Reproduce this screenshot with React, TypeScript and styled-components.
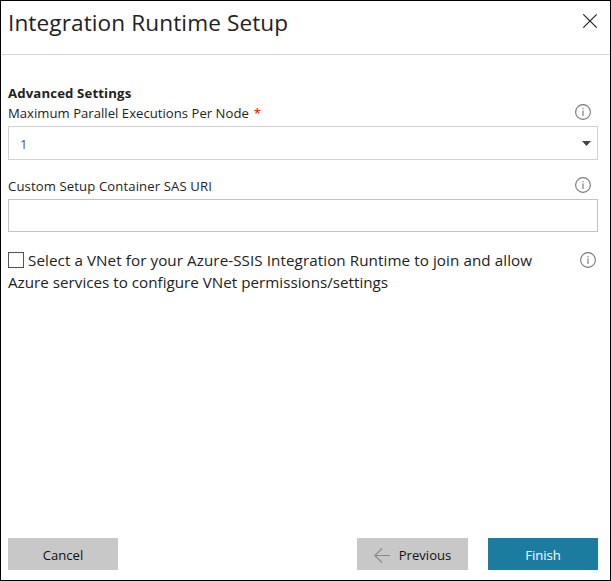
import React from 'react';
import styled, { createGlobalStyle } from 'styled-components';

const GlobalStyle = createGlobalStyle`
  * { box-sizing: border-box; }
  body { margin: 0; background: #fff; }
`;

const Dialog = styled.div`
  width: 611px;
  height: 581px;
  border: 1px solid #000;
  background: #fff;
  color: #222;
  font-family: 'Open Sans', 'Noto Sans', sans-serif;
  display: flex;
  flex-direction: column;
`;

const Header = styled.header`
  height: 54px;
  flex: none;
  display: flex;
  justify-content: space-between;
  align-items: flex-start;
  padding: 4px 12px 0 7px;
  border-bottom: 1px solid #d6d6d6;
`;

const Title = styled.h1`
  margin: 0;
  font-size: 22.6px;
  line-height: 36px;
  font-weight: 400;
  letter-spacing: 0.1px;
  white-space: nowrap;
`;

const CloseButton = styled.button`
  width: 16px;
  height: 16px;
  margin-top: 8px;
  padding: 0;
  border: 0;
  background: none;
  color: #222;
`;

const Icon = styled.svg`
  display: block;
  flex: none;
`;

const Body = styled.main`
  flex: 1;
  padding: 28px 12px 0 7px;
`;

const SectionTitle = styled.h2`
  margin: 0;
  height: 20px;
  font-size: 13.2px;
  line-height: 20px;
  font-weight: 700;
  letter-spacing: 0.13px;
  white-space: nowrap;
`;

const FieldHeader = styled.div`
  display: flex;
  justify-content: space-between;
  align-items: center;
  height: 18px;
  padding-right: 7px;
`;

const FieldLabel = styled.label<{ $spacing: number; $drop?: number }>`
  padding-top: ${(p) => p.$drop ?? 0}px;
  font-size: 13.1px;
  line-height: 18px;
  letter-spacing: ${(p) => p.$spacing}px;
  white-space: nowrap;
`;

const Required = styled.span`
  margin-left: 5px;
  font-weight: 600;
  color: #d83b01;
`;

const Select = styled.div`
  height: 34px;
  margin: 5px 0 16px;
  padding: 1px 6px 0 11px;
  border: 1px solid #d2d2d2;
  display: flex;
  justify-content: space-between;
  align-items: center;
  font-size: 13px;
  color: #555;
`;

const TextInput = styled.input`
  display: block;
  width: 590px;
  height: 33px;
  margin: 5px 0 17px;
  padding: 0 11px;
  border: 1px solid #c3c3c3;
  border-radius: 0;
  outline: 0;
`;

const VNetRow = styled.div`
  display: flex;
  justify-content: space-between;
  align-items: flex-start;
  padding-right: 2px;
`;

const VNetText = styled.label`
  font-size: 15.2px;
  line-height: 22px;
`;

const TextLine = styled.span<{ $spacing: number }>`
  display: flex;
  align-items: center;
  height: 22px;
  letter-spacing: ${(p) => p.$spacing}px;
  white-space: nowrap;
`;

const Checkbox = styled.input`
  appearance: none;
  width: 16px;
  height: 16px;
  margin: 0 4px 0 0;
  border: 1px solid #555;
  background: #fff;
`;

const InfoSlot = styled.div`
  padding-top: 3px;
`;

const Footer = styled.footer`
  flex: none;
  display: flex;
  gap: 20px;
  padding: 0 12px 10px 7px;
`;

const Button = styled.button<{ $primary?: boolean; $width?: number }>`
  width: ${(p) => p.$width ?? 110}px;
  height: 32px;
  padding: 2px 0 0;
  border: 0;
  display: flex;
  justify-content: center;
  align-items: center;
  gap: 9px;
  font: 400 13.1px 'Open Sans', 'Noto Sans', sans-serif;
  color: ${(p) => (p.$primary ? '#fff' : '#111')};
  background: ${(p) => (p.$primary ? '#1b7ca0' : '#c8c8c8')};
`;

const Spacer = styled.div`
  flex: 1;
`;

const InfoIcon = () => (
  <Icon width="16" height="16" viewBox="0 0 16 16" fill="none">
    <circle cx="8" cy="8" r="7.4" stroke="#777" strokeWidth="1.1" />
    <path d="M8 6.5V12M8 4V5.3" stroke="#888" strokeWidth="1.3" />
  </Icon>
);

export default function App() {
  return (
    <>
      <GlobalStyle />
      <Dialog role="dialog">
        <Header>
          <Title>Integration Runtime Setup</Title>
          <CloseButton aria-label="Close">
            <Icon width="16" height="16" viewBox="0 0 16 16">
              <path d="M1.3 1.3L14.7 14.7M14.7 1.3L1.3 14.7" stroke="currentColor" strokeWidth="1.2" />
            </Icon>
          </CloseButton>
        </Header>
        <Body>
          <SectionTitle>Advanced Settings</SectionTitle>
          <FieldHeader>
            <FieldLabel $spacing={0.03} $drop={2}>
              Maximum Parallel Executions Per Node<Required>*</Required>
            </FieldLabel>
            <InfoIcon />
          </FieldHeader>
          <Select role="combobox">
            1
            <Icon width="9" height="5" viewBox="0 0 9 5">
              <path d="M0 0H9L4.5 5Z" fill="#444" />
            </Icon>
          </Select>
          <FieldHeader>
            <FieldLabel htmlFor="sas" $spacing={0.13} $drop={2}>Custom Setup Container SAS URI</FieldLabel>
            <InfoIcon />
          </FieldHeader>
          <TextInput id="sas" />
          <VNetRow>
            <VNetText>
              <TextLine $spacing={0.08}>
                <Checkbox type="checkbox" />
                Select a VNet for your Azure-SSIS Integration Runtime to join and allow
              </TextLine>
              <TextLine $spacing={0.01}>Azure services to configure VNet permissions/settings</TextLine>
            </VNetText>
            <InfoSlot>
              <InfoIcon />
            </InfoSlot>
          </VNetRow>
        </Body>
        <Footer>
          <Button>Cancel</Button>
          <Spacer />
          <Button $width={111}>
            <Icon width="16" height="15" viewBox="0 0 16 15" fill="none">
              <path d="M16 7.5H0.8M8 0.5L0.8 7.5L8 14.5" stroke="#888" strokeWidth="1.1" />
            </Icon>
            Previous
          </Button>
          <Button $primary>Finish</Button>
        </Footer>
      </Dialog>
    </>
  );
}
